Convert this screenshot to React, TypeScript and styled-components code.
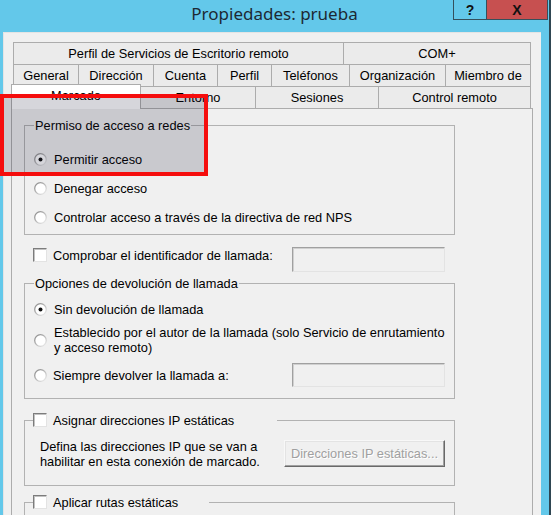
import React from 'react';
import styled, { createGlobalStyle } from 'styled-components';

const GlobalStyle = createGlobalStyle`
  html, body {
    margin: 0;
    padding: 0;
  }
  body {
    background: #63c8ea;
    font-family: "Liberation Sans", Arial, sans-serif;
  }
`

const Window = styled.div`
  position: relative;
  width: 551px;
  height: 515px;
  overflow: hidden;
  box-sizing: border-box;
  background: #63c8ea;
  border-right: 2px solid #2f4652;
  display: flex;
  flex-direction: column;
`

const TitleBar = styled.div`
  flex: none;
  height: 32px;
  display: grid;
  grid-template-columns: 1fr auto 1fr;
  align-items: start;
`

const Title = styled.div`
  grid-column: 2;
  font-family: "Noto Sans", sans-serif;
  font-size: 17px;
  line-height: 28px;
  color: #1d2833;
`

const CaptionButtons = styled.div`
  grid-column: 3;
  justify-self: end;
  display: flex;
  margin-right: 1px;
`

const CaptionButton = styled.div<{ $close?: boolean }>`
  width: ${p => (p.$close ? 61 : 34)}px;
  height: 20px;
  box-sizing: border-box;
  display: flex;
  align-items: center;
  justify-content: center;
  background: ${p => (p.$close ? '#c75050' : '#63c8ea')};
  border: 1px solid #34505c;
  border-top: none;
  ${p => p.$close && 'border-left: none;'}
  font-family: "Liberation Sans", Arial, sans-serif;
  font-weight: bold;
  font-size: 14px;
  color: #111;
`

const Client = styled.div`
  flex: 1;
  margin-left: 3px;
  width: 538px;
  box-sizing: border-box;
  background: #f0f0f0;
  border-left: 1px solid #e4e4e4;
  border-top: 1px solid #e4e4e4;
  padding: 9px 8px 0 7px;
  display: flex;
  flex-direction: column;
  font-size: 12.8px;
  color: #000;
`

const TabStrip = styled.div`
  padding: 0 2px;
  display: flex;
  flex-direction: column;
`

const TabRow = styled.div<{ $cols: number[] }>`
  display: grid;
  grid-template-columns: ${p => p.$cols.map(c => `${c}px`).join(' ')};
  height: 22px;
`

const Tab = styled.div<{ $selected?: boolean }>`
  box-sizing: border-box;
  display: flex;
  align-items: center;
  justify-content: center;
  white-space: nowrap;
  background: #ebebeb;
  border-top: 1px solid #acacac;
  border-left: 1px solid #acacac;
  &:last-child {
    border-right: 1px solid #acacac;
  }
  ${p =>
    p.$selected &&
    `
    position: relative;
    z-index: 2;
    margin: -2px -1px -1px -2px;
    background: #ffffff;
    border: 1px solid #acacac;
    border-bottom: none;
    padding-bottom: 3px;
  `}
`

const Panel = styled.div`
  flex: 1;
  border: 1px solid #acacac;
  background: #f0f0f0;
  padding: 9px 0 0 12px;
  display: flex;
  flex-direction: column;
  align-items: flex-start;
`

const Group = styled.fieldset<{ $mt?: number; $pt?: number; $pb?: number }>`
  margin: ${p => p.$mt ?? 0}px 0 0 0;
  width: 431px;
  box-sizing: border-box;
  border: 1px solid #b2b2b2;
  padding: ${p => p.$pt ?? 0}px 0 ${p => p.$pb ?? 0}px 9px;
  min-width: 0;
`

const Legend = styled.legend<{ $width?: number }>`
  padding: 0 1px;
  line-height: 15px;
  ${p => p.$width && `width: ${p.$width}px; margin-left: -1px; padding: 0; box-sizing: border-box;`}
`

const LegendCheck = styled.span`
  display: flex;
  align-items: center;
  gap: 6px;
  height: 16px;
`

const OptionRow = styled.div<{ $h?: number; $mt?: number }>`
  display: flex;
  align-items: center;
  gap: 7px;
  height: ${p => p.$h ?? 29}px;
  margin-top: ${p => p.$mt ?? 0}px;
  line-height: 15px;
`

const Label = styled.span`
  white-space: nowrap;
`

const LabelCol = styled.span<{ $width?: number }>`
  display: flex;
  align-items: center;
  gap: 6px;
  ${p => p.$width && `width: ${p.$width}px;`}
  height: 16px;
`

const CheckRow = styled.div<{ $mt?: number }>`
  display: flex;
  align-items: flex-start;
  margin-top: ${p => p.$mt ?? 0}px;
  padding-left: 9px;
`

const Box = styled.span`
  width: 14px;
  height: 14px;
  box-sizing: border-box;
  flex: none;
  background: #ffffff;
  border: 1px solid;
  border-color: #7c7c7c #e3e3e3 #e3e3e3 #7c7c7c;
  box-shadow: inset 1px 1px 0 #c2c2c2;
`

const TextBox = styled.div<{ $h?: number }>`
  width: 153px;
  height: ${p => p.$h ?? 25}px;
  box-sizing: border-box;
  background: #f0f0f0;
  border: 1px solid;
  border-color: #a0a0a0 #e3e3e3 #e3e3e3 #a0a0a0;
  box-shadow: inset 1px 1px 0 #d0d0d0;
`

const InfoRow = styled.div`
  display: flex;
  align-items: center;
  justify-content: space-between;
  height: 27px;
  padding-right: 9px;
`

const InfoText = styled.div`
  line-height: 15px;
  margin-left: 6px;
  white-space: nowrap;
`

const ClassicButton = styled.div`
  width: 161px;
  height: 27px;
  box-sizing: border-box;
  display: flex;
  align-items: center;
  justify-content: center;
  background: #f0f0f0;
  border: 1px solid;
  border-color: #f8f8f8 #696969 #696969 #f8f8f8;
  box-shadow: inset -1px -1px 0 #a0a0a0, inset 1px 1px 0 #e3e3e3;
  color: #a0a0a0;
  text-shadow: 1px 1px 0 #ffffff;
  white-space: nowrap;
`

const Highlight = styled.div`
  position: absolute;
  left: 0;
  top: 94px;
  width: 208px;
  height: 82px;
  box-sizing: border-box;
  border: 4px solid #f50d0d;
  background: rgba(30, 25, 55, 0.18);
  z-index: 10;
`

const Radio: React.FC<{ checked?: boolean }> = ({ checked }) => (
  <svg width="13" height="13" viewBox="0 0 13 13" style={{ flex: 'none' }}>
    <defs>
      <linearGradient id="radioEdge" x1="0" y1="0" x2="1" y2="1">
        <stop offset="0" stopColor="#858585" />
        <stop offset="0.5" stopColor="#b8b8b8" />
        <stop offset="1" stopColor="#f2f2f2" />
      </linearGradient>
    </defs>
    <circle cx="6.5" cy="6.5" r="5.8" fill="#ffffff" stroke="url(#radioEdge)" strokeWidth="1.3" />
    {checked && <circle cx="6.5" cy="6.5" r="2" fill="#111111" />}
  </svg>
)

const ROW1 = [
  { label: 'Perfil de Servicios de Escritorio remoto', width: 330 },
  { label: 'COM+', width: 188 },
]
const ROW2 = [
  { label: 'General', width: 65 },
  { label: 'Dirección', width: 75 },
  { label: 'Cuenta', width: 64 },
  { label: 'Perfil', width: 54 },
  { label: 'Teléfonos', width: 78 },
  { label: 'Organización', width: 96 },
  { label: 'Miembro de', width: 86 },
]
const ROW3 = [
  { label: 'Marcado', width: 127, selected: true },
  { label: 'Entorno', width: 115 },
  { label: 'Sesiones', width: 123 },
  { label: 'Control remoto', width: 153 },
]

type TabDef = { label: string; width: number; selected?: boolean }

const renderRow = (tabs: TabDef[]) => (
  <TabRow $cols={tabs.map(t => t.width)}>
    {tabs.map(t => (
      <Tab key={t.label} $selected={t.selected}>
        {t.label}
      </Tab>
    ))}
  </TabRow>
)

export default function App() {
  return (
    <>
      <GlobalStyle />
      <Window>
        <TitleBar>
          <Title>Propiedades: prueba</Title>
          <CaptionButtons>
            <CaptionButton>?</CaptionButton>
            <CaptionButton $close>X</CaptionButton>
          </CaptionButtons>
        </TitleBar>

        <Client>
          <TabStrip>
            {renderRow(ROW1)}
            {renderRow(ROW2)}
            {renderRow(ROW3)}
          </TabStrip>

          <Panel>
            <Group $pt={12} $pb={2}>
              <Legend>Permiso de acceso a redes</Legend>
              <OptionRow>
                <Radio checked />
                <Label>Permitir acceso</Label>
              </OptionRow>
              <OptionRow>
                <Radio />
                <Label>Denegar acceso</Label>
              </OptionRow>
              <OptionRow>
                <Radio />
                <Label>Controlar acceso a través de la directiva de red NPS</Label>
              </OptionRow>
            </Group>

            <CheckRow $mt={12}>
              <LabelCol $width={259}>
                <Box />
                <Label>Comprobar el identificador de llamada:</Label>
              </LabelCol>
              <TextBox />
            </CheckRow>

            <Group $mt={4} $pt={10} $pb={11}>
              <Legend>Opciones de devolución de llamada</Legend>
              <OptionRow $h={16}>
                <Radio checked />
                <Label>Sin devolución de llamada</Label>
              </OptionRow>
              <OptionRow $h={30} $mt={8}>
                <Radio />
                <Label>
                  Establecido por el autor de la llamada (solo Servicio de enrutamiento
                  <br />y acceso remoto)
                </Label>
              </OptionRow>
              <OptionRow $h={24} $mt={8}>
                <LabelCol $width={251}>
                  <Radio />
                  <Label>Siempre devolver la llamada a:</Label>
                </LabelCol>
                <TextBox $h={24} />
              </OptionRow>
            </Group>

            <Group $mt={13} $pt={12} $pb={18}>
              <Legend $width={244}>
                <LegendCheck>
                  <Box />
                  <Label>Asignar direcciones IP estáticas</Label>
                </LegendCheck>
              </Legend>
              <InfoRow>
                <InfoText>
                  Defina las direcciones IP que se van a
                  <br />
                  habilitar en esta conexión de marcado.
                </InfoText>
                <ClassicButton>Direcciones IP estáticas...</ClassicButton>
              </InfoRow>
            </Group>

            <Group $mt={8} $pt={40}>
              <Legend $width={176}>
                <LegendCheck>
                  <Box />
                  <Label>Aplicar rutas estáticas</Label>
                </LegendCheck>
              </Legend>
            </Group>
          </Panel>
        </Client>

        <Highlight />
      </Window>
    </>
  )
}
